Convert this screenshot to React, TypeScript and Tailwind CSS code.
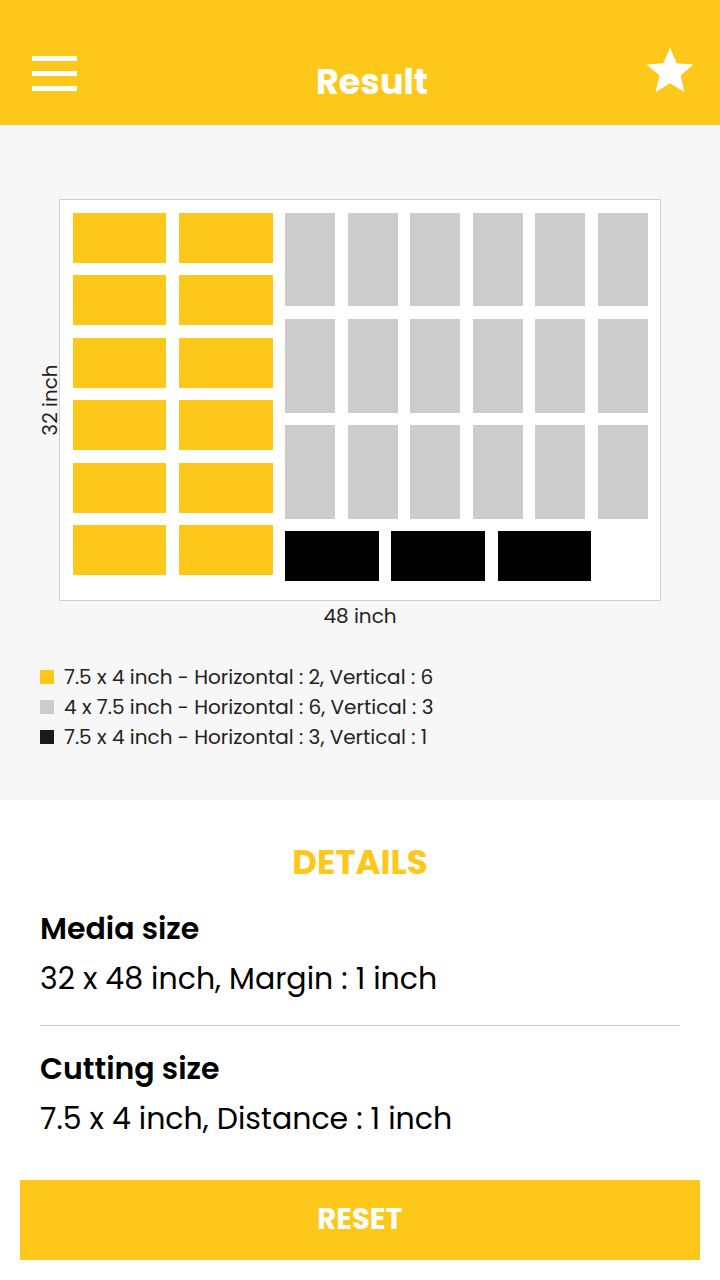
const SCALE = 12.5;
const MARGIN = 1;
const GAP = 1;

type Piece = { x: number; y: number; w: number; h: number; color: string };

function buildPieces(): Piece[] {
  const pieces: Piece[] = [];
  // yellow: 7.5 x 4, 2 across, 6 down
  for (let c = 0; c < 2; c++)
    for (let r = 0; r < 6; r++)
      pieces.push({ x: MARGIN + c * (7.5 + GAP), y: MARGIN + r * (4 + GAP), w: 7.5, h: 4, color: "#fec81b" });
  // gray: 4 x 7.5, 6 across, 3 down
  const gx = MARGIN + 2 * (7.5 + GAP);
  for (let c = 0; c < 6; c++)
    for (let r = 0; r < 3; r++)
      pieces.push({ x: gx + c * (4 + GAP), y: MARGIN + r * (7.5 + GAP), w: 4, h: 7.5, color: "#cccccc" });
  // black: 7.5 x 4, 3 across, 1 down
  for (let c = 0; c < 3; c++)
    pieces.push({ x: gx + c * (7.5 + GAP), y: MARGIN + 3 * (7.5 + GAP), w: 7.5, h: 4, color: "#000000" });
  return pieces;
}

const legend = [
  { color: "bg-[#fec81b]", text: "7.5 x 4 inch - Horizontal : 2, Vertical : 6" },
  { color: "bg-[#cccccc]", text: "4 x 7.5 inch - Horizontal : 6, Vertical : 3" },
  { color: "bg-[#1a1a1a]", text: "7.5 x 4 inch - Horizontal : 3, Vertical : 1" },
];

export default function App() {
  const pieces = buildPieces();

  return (
    <div className="w-[720px] h-[1280px] bg-white flex flex-col font-['Poppins','Open_Sans',sans-serif] text-black">
      {/* Header */}
      <header className="h-[125px] shrink-0 bg-[#fec81b] flex items-start pl-8 pr-[22px]">
        <div className="w-[45px] mt-[56px] flex flex-col gap-[10px]">
          <span className="h-[5px] bg-white" />
          <span className="h-[5px] bg-white" />
          <span className="h-[5px] bg-white" />
        </div>
        <h1 className="flex-1 pl-[25px] mt-[57px] text-center text-white font-bold text-[35px] leading-[50px]">
          Result
        </h1>
        <svg viewBox="0 0 24 24" className="w-[56px] h-[56px] mt-[43px]" fill="white">
          <path d="M12 17.27L18.18 21l-1.64-7.03L22 9.24l-7.19-.61L12 2 9.19 8.63 2 9.24l5.46 4.73L5.82 21z" />
        </svg>
      </header>

      {/* Diagram section */}
      <section className="h-[675px] shrink-0 bg-[#f7f7f7] flex flex-col pt-[74px] px-10">
        <div className="flex items-center">
          <div className="w-[19px] flex items-center justify-center">
            <span className="-rotate-90 whitespace-nowrap text-[20px] text-[#222]">32 inch</span>
          </div>
          <div className="relative w-[602px] h-[402px] bg-white border border-[#d0d0d0]">
            {pieces.map((p, i) => (
              <div
                key={i}
                className="absolute"
                style={{
                  left: p.x * SCALE,
                  top: p.y * SCALE,
                  width: p.w * SCALE,
                  height: p.h * SCALE,
                  backgroundColor: p.color,
                }}
              />
            ))}
          </div>
        </div>
        <div className="text-center text-[20px] text-[#222] leading-[30px]">48 inch</div>

        <ul className="mt-[31px] flex flex-col">
          {legend.map((l) => (
            <li key={l.text} className="flex items-center gap-[10px] h-[30px] text-[20px] text-[#222]">
              <span className={`w-[14px] h-[14px] ${l.color}`} />
              <span>{l.text}</span>
            </li>
          ))}
        </ul>
      </section>

      {/* Details */}
      <section className="flex-1 flex flex-col px-10 pt-[40px]">
        <h2 className="text-center text-[#fec81b] font-bold text-[34px] leading-[44px]">DETAILS</h2>
        <div className="mt-[25px] pb-[24px] border-b border-[#cccccc]">
          <h3 className="font-semibold text-[30px] leading-[40px]">Media size</h3>
          <p className="text-[30px] leading-[44px] mt-[8px]">32 x 48 inch, Margin : 1 inch</p>
        </div>
        <div className="pt-[23px]">
          <h3 className="font-semibold text-[30px] leading-[40px]">Cutting size</h3>
          <p className="text-[30px] leading-[44px] mt-[8px]">7.5 x 4 inch, Distance : 1 inch</p>
        </div>
      </section>

      <div className="px-5 pb-5">
        <button className="w-full h-[80px] bg-[#fec81b] text-white font-bold text-[29px]">RESET</button>
      </div>
    </div>
  );
}
